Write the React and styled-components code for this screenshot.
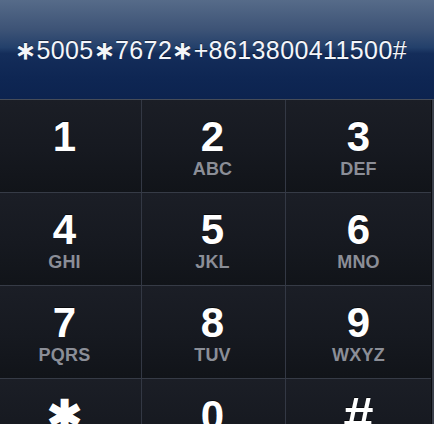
import React from "react";
import styled, { createGlobalStyle } from "styled-components";

const GlobalStyle = createGlobalStyle`
  html, body {
    margin: 0;
    padding: 0;
    background: #0f1218;
    overflow: hidden;
  }
  body {
    font-family: "Liberation Sans", Arial, sans-serif;
  }
`;

const Screen = styled.div`
  width: 434px;
  height: 424px;
  display: flex;
  flex-direction: column;
  overflow: hidden;
  background: #12151b;
`;

const Display = styled.div`
  height: 99px;
  flex-shrink: 0;
  display: flex;
  align-items: center;
  justify-content: center;
  border-bottom: 1px solid #464c58;
  background: linear-gradient(
    to bottom,
    #566b89 0%,
    #3d5376 30%,
    #23406b 48%,
    #142d5a 54%,
    #0e2653 80%,
    #0c234f 100%
  );
`;

const Number = styled.div`
  color: #f4f6fa;
  font-size: 25px;
  letter-spacing: 0.4px;
  margin-top: 2px;
  margin-right: 12px;
  text-shadow: 0 -1px 0 rgba(0, 0, 0, 0.45);
`;

const Star = styled.span`
  font-weight: bold;
`;

const Pad = styled.div`
  flex: 1;
  display: grid;
  grid-template-columns: 142px 144px 145px 3px;
  grid-auto-rows: 93px;
`;

const Key = styled.div`
  display: flex;
  flex-direction: column;
  align-items: center;
  padding-top: 18px;
  padding-right: ${({ $shift }) => $shift || 0}px;
  box-sizing: border-box;
  border-bottom: 1px solid #363b46;
  border-right: ${({ $last }) => ($last ? "none" : "1px solid #333844")};
  background: linear-gradient(to bottom, #1b1e26 0%, #161920 55%, #111419 100%);
`;

const Edge = styled.div`
  background: #3a3f4a;
  border-left: 1px solid #0c0e12;
`;

const Digit = styled.div`
  color: #ffffff;
  font-size: ${({ $size }) => $size || 42}px;
  font-weight: bold;
  line-height: 38px;
  text-shadow: 0 -1px 0 rgba(0, 0, 0, 0.6);
`;

const Letters = styled.div`
  color: #8b8e97;
  font-size: 18px;
  font-weight: bold;
  line-height: 18px;
  margin-top: 4px;
  letter-spacing: 0.2px;
`;

const keys = [
  ["1", ""],
  ["2", "ABC"],
  ["3", "DEF"],
  ["4", "GHI"],
  ["5", "JKL"],
  ["6", "MNO"],
  ["7", "PQRS"],
  ["8", "TUV"],
  ["9", "WXYZ"],
  ["\u2731", ""],
  ["0", ""],
  ["#", "", 54],
];

export default function App() {
  const rows = [0, 1, 2, 3];
  return (
    <>
      <GlobalStyle />
      <Screen>
        <Display>
          <Number>
            <Star>∗</Star>5005<Star>∗</Star>7672<Star>∗</Star>+8613800411500#
          </Number>
        </Display>
        <Pad>
          {rows.map((r) => (
            <React.Fragment key={r}>
              {keys.slice(r * 3, r * 3 + 3).map(([d, l, size], i) => (
                <Key key={d} $shift={i === 0 ? 12 : i === 1 ? 2 : 0} $last={i === 2}>
                  <Digit $size={size}>{d}</Digit>
                  {l && <Letters>{l}</Letters>}
                </Key>
              ))}
              <Edge />
            </React.Fragment>
          ))}
        </Pad>
      </Screen>
    </>
  );
}
